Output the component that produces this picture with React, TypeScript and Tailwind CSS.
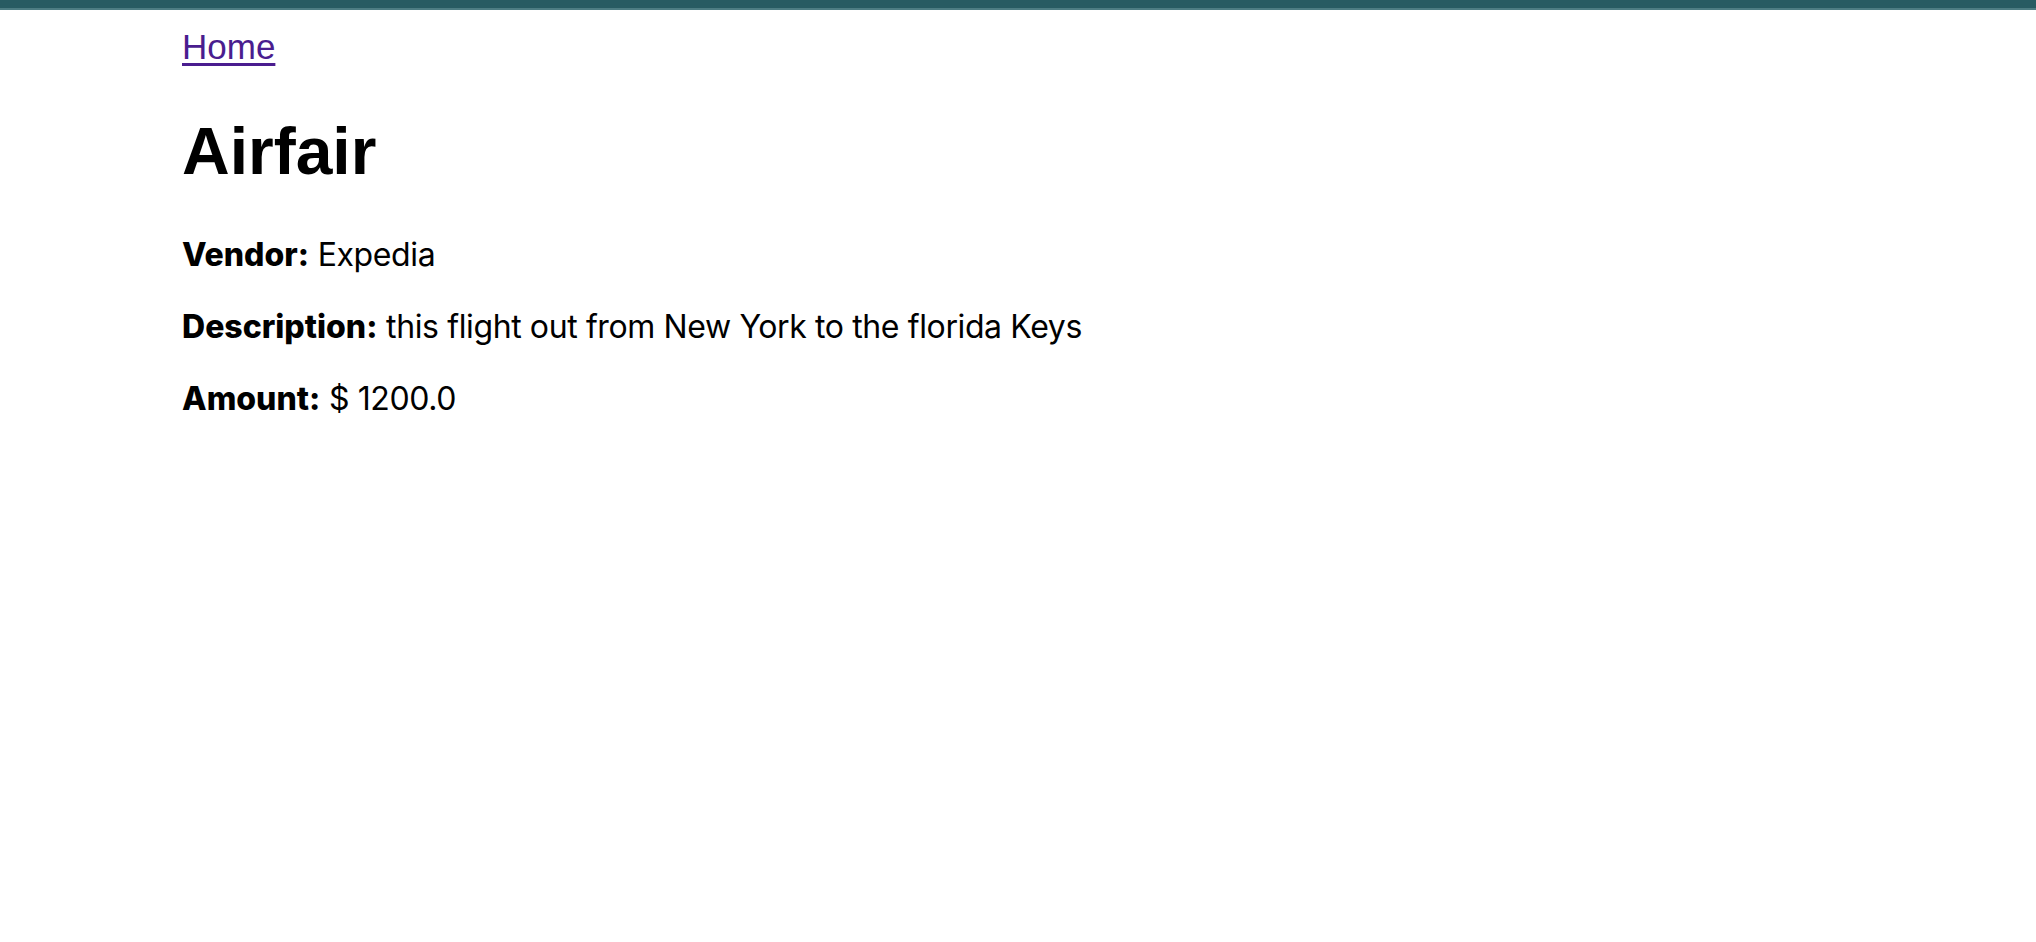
export default function App() {
  return (
    <div className="min-h-screen bg-white">
      <div className="h-[8px] bg-[#285b62]" />
      <div className="h-[2px] bg-[#4e7d83]" />
      <main className="px-[182px] text-black">
        <a
          href="#"
          className="mt-[17px] inline-block text-[35px] leading-[40px] text-[#4a1d8f] underline underline-offset-[4px] decoration-[3px] font-['Liberation_Sans',Arial,sans-serif]"
        >
          Home
        </a>
        <h1 className="mt-[46px] text-[66px] leading-[76px] font-bold font-['Liberation_Sans',Arial,sans-serif]">
          Airfair
        </h1>
        <div className="mt-[50px] flex flex-col gap-[40px] text-[32px] leading-[32px] tracking-[-0.012em] font-['Inter',sans-serif]">
          <p>
            <span className="font-extrabold tracking-normal">Vendor:</span> Expedia
          </p>
          <p>
            <span className="font-extrabold tracking-normal">Description:</span> this flight out from New York to the florida Keys
          </p>
          <p>
            <span className="font-extrabold tracking-normal">Amount:</span> $ 1200.0
          </p>
        </div>
      </main>
    </div>
  )
}
